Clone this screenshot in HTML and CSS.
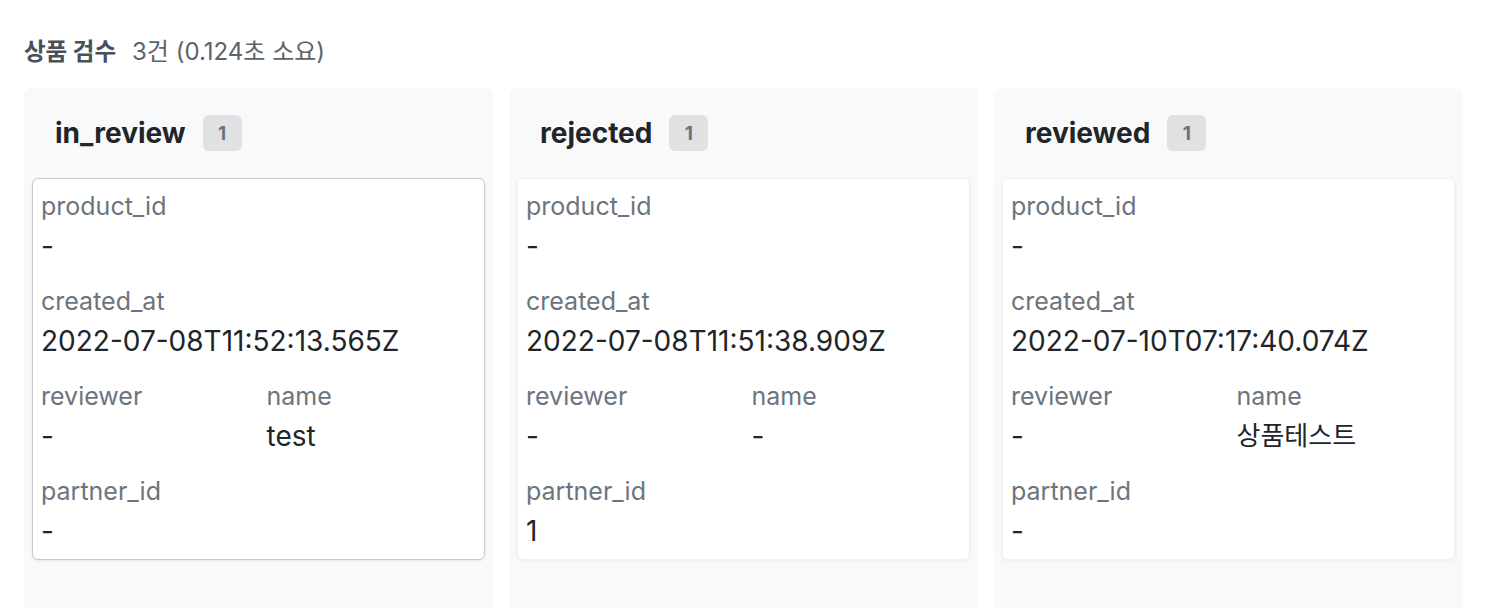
FILE: index.html
```html
<!DOCTYPE html>
<html lang="ko">
<head>
<meta charset="utf-8">
<title>상품 검수</title>
<link rel="stylesheet" href="styles.css">
</head>
<body>
<div class="page">
  <div class="title">
    <span class="title-main">상품 검수</span>
    <span class="title-meta">3건 (0.124초 소요)</span>
  </div>
  <div class="board">
    <section class="column">
      <header class="col-head">
        <h2 class="col-name">in_review</h2>
        <span class="badge">1</span>
      </header>
      <article class="card card-active">
        <div class="field"><div class="label">product_id</div><div class="value">-</div></div>
        <div class="field"><div class="label">created_at</div><div class="value">2022-07-08T11:52:13.565Z</div></div>
        <div class="pair">
          <div class="field"><div class="label">reviewer</div><div class="value">-</div></div>
          <div class="field"><div class="label">name</div><div class="value">test</div></div>
        </div>
        <div class="field"><div class="label">partner_id</div><div class="value">-</div></div>
      </article>
    </section>
    <section class="column">
      <header class="col-head">
        <h2 class="col-name">rejected</h2>
        <span class="badge">1</span>
      </header>
      <article class="card">
        <div class="field"><div class="label">product_id</div><div class="value">-</div></div>
        <div class="field"><div class="label">created_at</div><div class="value">2022-07-08T11:51:38.909Z</div></div>
        <div class="pair">
          <div class="field"><div class="label">reviewer</div><div class="value">-</div></div>
          <div class="field"><div class="label">name</div><div class="value">-</div></div>
        </div>
        <div class="field"><div class="label">partner_id</div><div class="value">1</div></div>
      </article>
    </section>
    <section class="column">
      <header class="col-head">
        <h2 class="col-name">reviewed</h2>
        <span class="badge">1</span>
      </header>
      <article class="card">
        <div class="field"><div class="label">product_id</div><div class="value">-</div></div>
        <div class="field"><div class="label">created_at</div><div class="value">2022-07-10T07:17:40.074Z</div></div>
        <div class="pair">
          <div class="field"><div class="label">reviewer</div><div class="value">-</div></div>
          <div class="field"><div class="label">name</div><div class="value value-ko">상품테스트</div></div>
        </div>
        <div class="field"><div class="label">partner_id</div><div class="value">-</div></div>
      </article>
    </section>
  </div>
</div>
</body>
</html>
```
FILE: styles.css
```css
html, body {
  margin: 0;
  padding: 0;
  background: #ffffff;
}
body {
  font-family: Inter, "Noto Sans CJK KR", "Noto Sans", sans-serif;
  color: #212529;
  overflow: hidden;
}
.page {
  padding: 35px 24px 0 24px;
}
.title {
  display: flex;
  align-items: baseline;
  gap: 16px;
  height: 34px;
  line-height: 34px;
  margin-bottom: 19px;
  color: #495057;
}
.title-main {
  font-size: 23.5px;
  font-weight: 700;
}
.title-meta {
  font-size: 24px;
  font-weight: 400;
  color: #5c636a;
}
.board {
  display: flex;
  gap: 16px;
}
.column {
  width: 469px;
  height: 560px;
  flex: none;
  background: #f8f9fa;
  border-radius: 7px;
  padding: 0 8px;
  box-sizing: border-box;
}
.col-head {
  display: flex;
  align-items: center;
  gap: 17px;
  height: 90px;
  padding-left: 23px;
  box-sizing: border-box;
}
.col-name {
  margin: 0;
  font-size: 28px;
  font-weight: 700;
  color: #212529;
  line-height: 36px;
}
.badge {
  display: inline-flex;
  align-items: center;
  justify-content: center;
  width: 39px;
  height: 36px;
  border-radius: 6px;
  background: #dfe1e3;
  color: #6c737a;
  font-size: 19px;
  font-weight: 700;
}
.card {
  background: #ffffff;
  border: 1px solid #f0f1f3;
  border-radius: 6px;
  box-shadow: 0 1px 4px rgba(0, 0, 0, 0.06);
  padding: 10px 8px 10px 8px;
  display: flex;
  flex-direction: column;
  gap: 20px;
}
.card-active {
  border-color: #c6cacf;
  box-shadow: 0 1px 3px rgba(0, 0, 0, 0.08);
}
.pair {
  display: grid;
  grid-template-columns: 1fr 1fr;
  column-gap: 16px;
}
.label {
  font-size: 25px;
  line-height: 34px;
  color: #6c757d;
  margin-bottom: 5px;
}
.value {
  font-size: 28px;
  line-height: 36px;
  color: #212529;
}
.value-ko {
  font-size: 26px;
}
```
